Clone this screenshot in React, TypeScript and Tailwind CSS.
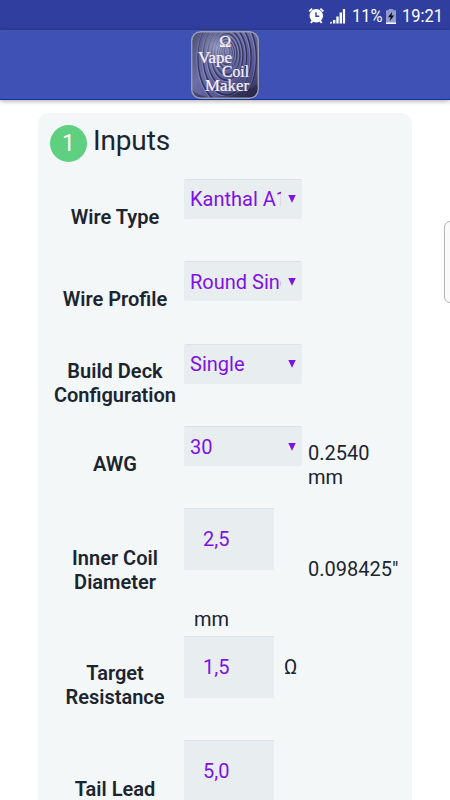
import React from "react";

function AlarmIcon() {
  return (
    <svg width="17" height="17" viewBox="0 0 17 17" className="mr-[-2px] mt-[-1px] shrink-0">
      <circle cx="8.3" cy="8.7" r="6.8" fill="#fff" />
      <path d="M1.2 4.4 4.2 1.6M15.4 4.4 12.4 1.6M2.8 15.8l1.8-2M13.8 15.8l-1.8-2" stroke="#fff" strokeWidth="1.8" />
      <path d="M8 5.2v4h3.2" stroke="#303f9f" strokeWidth="1.4" fill="none" />
    </svg>
  );
}

function SignalIcon() {
  return (
    <svg width="17" height="16" viewBox="0 0 17 16" className="shrink-0">
      <path d="M1 15.5v-1l2-1v2zM4 15.5v-3.6h2.4v3.6zM7.3 15.5V8.4h2.4v7.1zM10.6 15.5V4.6H13v10.9zM13.9 15.5V1h2.2v14.5z" fill="#fff" />
    </svg>
  );
}

function BatteryIcon() {
  return (
    <svg width="10" height="15" viewBox="0 0 10 15" className="shrink-0">
      <path d="M2.8 0h4.4v1.3H10V15H0V1.3h2.8z" fill="#929bd0" />
      <path d="M0 13.5h10V15H0z" fill="#fff" />
      <path d="M6.2 2.8 2 8.2h2.7L3.6 12.2 8.2 6.4H5.5z" fill="#080a18" />
    </svg>
  );
}

const ripples = [4, 7, 10, 13, 17, 21, 26, 32, 39];

function AppLogo() {
  return (
    <svg width="70" height="70" viewBox="0 0 70 70" className="shrink-0">
      <defs>
        <linearGradient id="metal" x1="0" y1="0" x2="1" y2="1">
          <stop offset="0" stopColor="#45486f" />
          <stop offset=".4" stopColor="#6c6fa6" />
          <stop offset=".7" stopColor="#565693" />
          <stop offset="1" stopColor="#302f55" />
        </linearGradient>
        <radialGradient id="glow" cx=".38" cy=".25" r=".42">
          <stop offset="0" stopColor="#c1c6e3" stopOpacity=".6" />
          <stop offset="1" stopColor="#6267a0" stopOpacity="0" />
        </radialGradient>
        <clipPath id="face">
          <rect x="2" y="2" width="66" height="66" rx="8" />
        </clipPath>
      </defs>
      <rect x="1.7" y="1.7" width="66.6" height="66.6" rx="9" fill="url(#metal)" />
      <g clipPath="url(#face)" fill="none">
        {ripples.map((r, i) => (
          <g key={r}>
            <ellipse cx="37" cy={21 + i * 0.8} rx={r * 0.75} ry={r * 1.2} stroke="#1e1e42" strokeWidth="1.5" opacity=".7" />
            <ellipse cx="36" cy={22.4 + i * 0.8} rx={r * 0.75} ry={r * 1.2} stroke="#a5a9d2" strokeWidth=".8" opacity=".6" />
          </g>
        ))}
        <path d="M2 60Q12 70 34 66T68 54V70H2z" fill="#171527" opacity=".4" />
        <rect width="70" height="70" fill="url(#glow)" />
      </g>
      <rect x="1.7" y="1.7" width="66.6" height="66.6" rx="9" fill="none" stroke="#9c9fab" strokeWidth="1.4" />
      <g fill="#f8f3ff" stroke="#f8f3ff" strokeWidth=".2" fontFamily="'Liberation Serif', serif" fontSize="16">
        <text x="29.2" y="17">Ω</text>
        <text x="8" y="32.5" textLength="34" lengthAdjust="spacingAndGlyphs">Vape</text>
        <text x="32" y="46.5" textLength="27" lengthAdjust="spacingAndGlyphs">Coil</text>
        <text x="15" y="60.5" textLength="44" lengthAdjust="spacingAndGlyphs">Maker</text>
      </g>
    </svg>
  );
}

function Label({ children, className }: { children: React.ReactNode; className: string }) {
  return <div className={`w-[130px] shrink-0 text-center font-semibold text-[#1b2530] ${className}`}>{children}</div>;
}

function Select({ value, className = "pb-px" }: { value: string; className?: string }) {
  return (
    <div className={`ml-1 flex h-10 w-[118px] shrink-0 items-center rounded-[2px] border-t border-[#dce1e3] bg-[#e8edf0] pl-1.5 pr-[5px] text-[#7e12e4] ${className}`}>
      <span className="w-[91px] overflow-hidden whitespace-nowrap">{value}</span>
      <svg width="8" height="8" viewBox="0 0 8 8" className="ml-[7px] shrink-0">
        <path d="M.3 0h7.4L4 7.8z" fill="currentColor" />
      </svg>
    </div>
  );
}

function Field({ value }: { value: string }) {
  return (
    <div className="flex h-[62px] w-[90px] shrink-0 items-center border-t border-[#dce1e3] bg-[#e8edf0] pb-px pl-[19px] text-[#7e12e4]">
      {value}
    </div>
  );
}

export default function App() {
  return (
    <div className="relative h-[800px] w-[450px] overflow-hidden bg-white font-['Roboto',sans-serif] text-[20px] leading-6 text-[#1b2530]">
      <div className="flex h-[30px] items-center justify-end bg-[#303f9f] pr-[7px] pt-0.5 text-[19px] text-white">
        <AlarmIcon />
        <span className="ml-1.5 flex"><SignalIcon /></span>
        <span className="ml-1.5 w-[30px] whitespace-nowrap"><span className="inline-block origin-left scale-x-[.87]">11%</span></span>
        <span className="ml-[4px] mr-px flex"><BatteryIcon /></span>
        <span className="ml-[5px] w-[41px] whitespace-nowrap"><span className="inline-block origin-left scale-x-[.87]">19:21</span></span>
      </div>
      <header className="relative flex h-[70px] justify-center border-b border-[#1230a0] bg-[#3f51b5] shadow-[0_1px_5px_rgba(0,0,0,0.35)]">
        <AppLogo />
      </header>

      <main className="ml-[38px] mt-[13px] h-[720px] w-[374px] rounded-[10px] bg-[#f4f7f8] pl-3">
        <h1 className="flex h-[66px] pt-[11px] text-[28px] leading-8">
          <span className="mt-px flex size-[37px] items-center justify-center rounded-full bg-[#5fcf80] text-[23px] text-white">1</span>
          <span className="ml-[6px] pt-px tracking-[-0.15px]">Inputs</span>
        </h1>
        <div className="flex h-[82px]">
          <Label className="pt-[26px]">Wire Type</Label>
          <Select value="Kanthal A1" />
        </div>
        <div className="flex h-[83px]">
          <Label className="pt-[26px]">Wire Profile</Label>
          <Select value="Round Single" className="pb-0" />
        </div>
        <div className="flex h-[82px]">
          <Label className="pt-[15px]">Build Deck Configuration</Label>
          <Select value="Single" />
        </div>
        <div className="flex h-[82px]">
          <Label className="pt-[26px]">AWG</Label>
          <Select value="30" className="pb-0" />
          <div className="ml-1.5 w-[80px] pt-[15px]">0.2540 mm</div>
        </div>
        <div className="flex h-[128px]">
          <Label className="pt-[38px]">Inner Coil<br />Diameter</Label>
          <div className="ml-1 w-[118px]">
            <Field value="2,5" />
            <div className="pl-[10px] pt-[37px]">mm</div>
          </div>
          <div className="ml-1.5 pt-[49px]">0.098425"</div>
        </div>
        <div className="flex h-[104px]">
          <Label className="pt-[25px]">Target Resistance</Label>
          <div className="ml-1"><Field value="1,5" /></div>
          <div className="ml-[10px] pt-[19px]">Ω</div>
        </div>
        <div className="flex">
          <Label className="pt-[37px]">Tail Lead</Label>
          <div className="ml-1"><Field value="5,0" /></div>
        </div>
      </main>
      <div className="absolute left-[444px] top-[221px] h-[82px] w-3 rounded-[6px] border border-[#b4b4b4] bg-[#fafafa]" />
    </div>
  );
}
